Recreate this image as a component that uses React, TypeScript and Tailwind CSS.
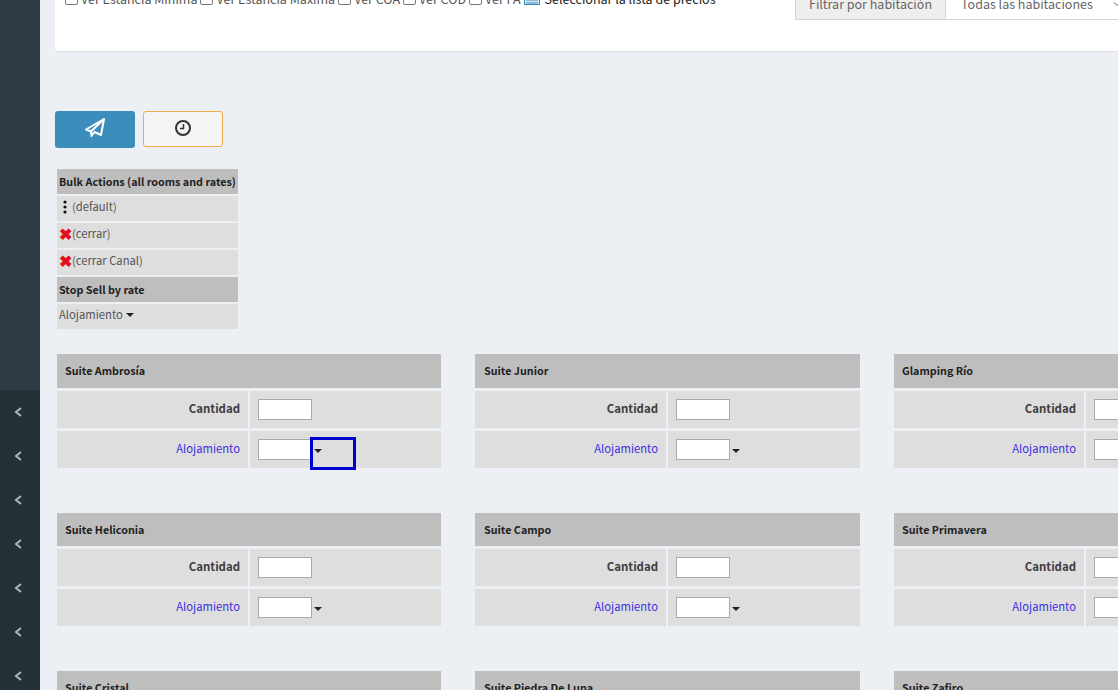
import { ChevronDown } from 'lucide-react'

function Caret() {
  return <span className="inline-block border-x-[4px] border-t-[4px] border-x-transparent border-t-[#222] align-middle" />
}

function RoomCard({ name, className, headClass, labelClass, highlight }: { name: string; className: string; headClass: string; labelClass: string; highlight?: boolean }) {
  return (
    <div className={className}>
      <div className={`flex items-center bg-[#bebebe] text-[10.75px] font-bold text-[#222] ${headClass}`}>{name}</div>
      <div className="mt-[3px] flex h-[37px] gap-[2px]">
        <div className={`flex shrink-0 items-center justify-end bg-[#dedede] pb-[2px] pr-[8px] text-[11.4px] font-bold text-[#3d3d3d] ${labelClass}`}>Cantidad</div>
        <div className="flex flex-1 items-center bg-[#dedede] pl-2">
          <input className="h-[21px] w-[54px] shrink-0 border border-[#aaa] bg-white" />
        </div>
      </div>
      <div className="mt-[3px] flex h-[37px] gap-[2px]">
        <div className={`flex shrink-0 items-center justify-end bg-[#dedede] pb-[2px] pr-[8px] text-[11.25px] text-[#3c2ee0] ${labelClass}`}>Alojamiento</div>
        <div className="relative flex flex-1 items-center bg-[#dedede] pl-2">
          <input className="h-[21px] w-[54px] shrink-0 border border-[#aaa] bg-white" />
          <span className="ml-[2px] mt-[3px] flex"><Caret /></span>
          {highlight && <div className="absolute left-[60px] top-[6px] h-[33px] w-[46px] border-[3px] border-[#0000d0]" />}
        </div>
      </div>
    </div>
  )
}

function Rows({ names, headClass, highlight }: { names: string[]; headClass: string; highlight?: boolean }) {
  return (
    <div className="flex">
      <RoomCard name={names[0]} headClass={`pl-2 ${headClass}`} labelClass="w-[191px]" className="w-[384px] shrink-0" highlight={highlight} />
      <RoomCard name={names[1]} headClass={`pl-[9px] ${headClass}`} labelClass="w-[191px]" className="ml-[34px] w-[385px] shrink-0" />
      <RoomCard name={names[2]} headClass={`pl-2 ${headClass}`} labelClass="w-[190px]" className="ml-[34px] w-[385px] shrink-0" />
    </div>
  )
}

function Check({ label }: { label: string }) {
  return (
    <label className="flex items-center gap-[3px]">
      <span className="h-[12px] w-[13px] rounded-[2px] border border-[#767676] bg-white" />
      {label}
    </label>
  )
}

export default function App() {
  return (
    <div className="flex h-[690px] w-[1118px] overflow-hidden bg-[#eceff4] text-[#555]" style={{ fontFamily: '"Noto Sans CJK SC", "Noto Sans", sans-serif' }}>
      <aside className="flex w-[40px] shrink-0 flex-col">
        <div className="h-[390px] shrink-0 bg-[#2e3d45]" />
        <div className="flex flex-1 flex-col gap-[24px] bg-[#243137] pt-[12px]">
          {Array.from({ length: 7 }).map((_, i) => (
            <svg key={i} className="ml-[14px] h-[20px] w-[8px] shrink-0 text-[#a9b8be]" viewBox="0 0 8 20" fill="none" stroke="currentColor" strokeWidth="2"><path d="M7 6 2 10l5 4" /></svg>
          ))}
        </div>
      </aside>
      <main className="min-w-0 flex-1 overflow-hidden">
        <div className="ml-[15px] flex h-[52px] items-start justify-between overflow-hidden rounded-b-[3px] border-b border-[#dcdfe3] bg-white text-[12.5px]">
          <div className="ml-[10px] mt-[-11px] flex h-[20px] items-center gap-[3px] whitespace-nowrap">
            <Check label="Ver Estancia Mínima" />
            <Check label="Ver Estancia Máxima" />
            <Check label="Ver COA" />
            <Check label="Ver COD" />
            <Check label="Ver FA" />
            <svg className="shrink-0" width="16" height="12" viewBox="0 0 16 12"><rect x=".5" y=".5" width="15" height="11" fill="#d6e6f2" stroke="#3c8dbc" /><path d="M2 4h12M2 7h12M2 10h12" stroke="#3c8dbc" /></svg>
            <span className="ml-[2px] text-[#222]">Seleccionar la lista de precios</span>
          </div>
          <div className="mt-[-11px] flex h-[31px] w-[323px] shrink-0 border-b border-l border-[#d2d6de] text-[#666]">
            <div className="flex w-[150px] items-center justify-center border-r border-[#d2d6de] bg-[#eeeeee]">Filtrar por habitación</div>
            <div className="flex flex-1 items-center justify-between whitespace-nowrap pl-[15px]">
              Todas las habitaciones
              <ChevronDown size={12} className="mr-[-5px] shrink-0" />
            </div>
          </div>
        </div>
        <div className="ml-[15px] mt-[59px] flex items-start gap-2">
          <button className="flex h-[37px] w-[80px] items-center justify-center rounded-[3px] bg-[#3c8dbc] pb-[3px] text-white">
            <svg width="22" height="20" viewBox="0 0 22 20" fill="none" stroke="currentColor" strokeWidth="2" strokeLinejoin="round"><path d="M20 1 2 11.5l5 2L20 1l-3 16-6.5-3-3 4-.5-4.5" /></svg>
          </button>
          <button className="flex h-[36px] w-[80px] items-center justify-center rounded-[3px] border border-[#f0ad4e] bg-[#f4f4f4] pb-[2px] text-[#333]">
            <svg width="18" height="18" viewBox="0 0 18 18" fill="none" stroke="currentColor" strokeWidth="2"><circle cx="9" cy="9" r="7" /><path d="M9.5 5v4.5H6" strokeWidth="1.5" /></svg>
          </button>
        </div>
        <div className="ml-[17px] mt-[21px] flex w-[181px] flex-col gap-[2px] text-[11.25px]">
          <div className="flex h-[25px] items-center whitespace-nowrap bg-[#bebebe] pl-[2px] pt-[2px] text-[10.75px] font-bold text-[#222]">Bulk Actions (all rooms and rates)</div>
          <div className="flex h-[25px] items-center bg-[#dedede] pb-[4px] pl-[2px]">
            <svg className="ml-[4px] mr-[5px]" width="4" height="14" viewBox="0 0 4 14" fill="#111"><circle cx="2" cy="2" r="1.6" /><circle cx="2" cy="7" r="1.6" /><circle cx="2" cy="12" r="1.6" /></svg>
            (default)
          </div>
          <div className="flex h-[25px] items-center bg-[#dedede] pb-[4px] pl-[2px]"><span className="mt-[-2px] text-[16px] font-bold leading-none text-[#e01020]">✖</span>(cerrar)</div>
          <div className="flex h-[25px] items-center bg-[#dedede] pb-[4px] pl-[2px]"><span className="mt-[-2px] text-[16px] font-bold leading-none text-[#e01020]">✖</span>(cerrar Canal)</div>
          <div className="flex h-[25px] items-center bg-[#bebebe] pl-[2px] pt-[2px] text-[10.75px] font-bold text-[#222]">Stop Sell by rate</div>
          <div className="flex h-[25px] items-center gap-[3px] bg-[#dedede] pb-[4px] pl-[2px]">Alojamiento <Caret /></div>
        </div>
        <div className="ml-[17px] mt-[25px] flex flex-col gap-[45px]">
          <Rows names={['Suite Ambrosía', 'Suite Junior', 'Glamping Río']} headClass="h-[34px]" highlight />
          <Rows names={['Suite Heliconia', 'Suite Campo', 'Suite Primavera']} headClass="h-[33px] pt-[2px]" />
          <Rows names={['Suite Cristal', 'Suite Piedra De Luna', 'Suite Zafiro']} headClass="h-[34px]" />
        </div>
      </main>
    </div>
  )
}
